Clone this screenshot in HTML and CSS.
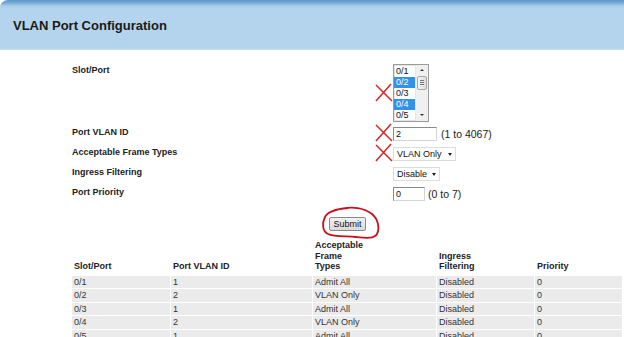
FILE: index.html
```html
<!DOCTYPE html>
<html>
<head>
  <link rel="stylesheet" href="styles.css">
</head>
<body>
  <div class="header">
    <h1 class="title">VLAN Port Configuration</h1>
  </div>

  <!-- Port settings form -->
  <div class="form">
    <div class="label first">Slot/Port</div>
    <div class="mark big"><svg viewBox="0 0 18 19" width="18" height="19"><path d="M1 2 L17 18 M16 1 L1 18" /></svg></div>
    <div class="control">
      <div class="listbox">
        <div class="items">
          <div class="item">0/1</div>
          <div class="item selected">0/2</div>
          <div class="item">0/3</div>
          <div class="item selected">0/4</div>
          <div class="item">0/5</div>
        </div>
        <div class="scrollbar">
          <div class="arrow up"></div>
          <div class="thumb"><span></span><span></span><span></span></div>
          <div class="track"></div>
          <div class="arrow down"></div>
        </div>
      </div>
    </div>

    <div class="label">Port VLAN ID</div>
    <div class="mark"><svg viewBox="0 0 18 19" width="18" height="19"><path d="M1 2 L17 18 M16 1 L1 18" /></svg></div>
    <div class="control">
      <input class="field vlan" type="text" value="2">
      <span class="hint">(1 to 4067)</span>
    </div>

    <div class="label">Acceptable Frame Types</div>
    <div class="mark"><svg viewBox="0 0 18 19" width="18" height="19"><path d="M1 2 L17 18 M16 1 L1 18" /></svg></div>
    <div class="control">
      <div class="select frames">VLAN Only <span class="caret"></span></div>
    </div>

    <div class="label">Ingress Filtering</div>
    <div class="mark"></div>
    <div class="control">
      <div class="select ingress">Disable <span class="caret"></span></div>
    </div>

    <div class="label">Port Priority</div>
    <div class="mark"></div>
    <div class="control">
      <input class="field prio" type="text" value="0">
      <span class="hint small">(0 to 7)</span>
    </div>
  </div>

  <div class="actions">
    <div class="submit-wrap">
      <button class="submit">Submit</button>
      <svg class="circle" viewBox="0 0 66 38" width="66" height="38">
        <path d="M24 5 C34 2 46 4 54 10 C60 15 62 24 59 30 C56 35 48 34 38 33 C28 32 16 33 10 30 C4 27 4 19 7 13 C10 7 18 5 30 4" />
      </svg>
    </div>
  </div>

  <!-- Current port table -->
  <table class="ports">
    <colgroup>
      <col class="c1"><col class="c2"><col class="c3"><col class="c4"><col class="c5">
    </colgroup>
    <thead>
      <tr>
        <th>Slot/Port</th>
        <th>Port VLAN ID</th>
        <th>Acceptable<br>Frame<br>Types</th>
        <th>Ingress<br>Filtering</th>
        <th>Priority</th>
      </tr>
    </thead>
    <tbody>
      <tr><td>0/1</td><td>1</td><td>Admit All</td><td>Disabled</td><td>0</td></tr>
      <tr><td>0/2</td><td>2</td><td>VLAN Only</td><td>Disabled</td><td>0</td></tr>
      <tr><td>0/3</td><td>1</td><td>Admit All</td><td>Disabled</td><td>0</td></tr>
      <tr><td>0/4</td><td>2</td><td>VLAN Only</td><td>Disabled</td><td>0</td></tr>
      <tr><td>0/5</td><td>1</td><td>Admit All</td><td>Disabled</td><td>0</td></tr>
    </tbody>
  </table>
</body>
</html>
```

FILE: styles.css
```css
  body {
    margin: 0;
    overflow: hidden;
    background: #fff;
    font-family: "Liberation Sans", Arial, sans-serif;
    color: #222;
  }

  /* Title bar */
  .header {
    height: 50px;
    box-sizing: border-box;
    padding: 18px 0 0 13px;
    border-top-left-radius: 8px;
    background: linear-gradient(to bottom, #5d98cb 0, #78acd8 3px, #a9cde8 6px, #b3d4ec 9px, #b3d4ec 48px, #c9e0f1 50px);
  }

  .title {
    margin: 0;
    font-size: 13px;
    line-height: 16px;
    font-weight: bold;
    color: #1a1a1a;
  }

  /* Form grid */
  .form {
    margin-top: 14px;
    padding-left: 72px;
    display: grid;
    grid-template-columns: 303px 18px auto;
    grid-template-rows: 57px 14px 14px 14px 14px;
    row-gap: 6px;
  }

  .label {
    font-size: 9px;
    line-height: 11px;
    font-weight: bold;
    align-self: start;
  }

  .label.first {
    margin-top: 1px;
  }

  .mark {
    align-self: center;
    margin-top: -3px;
  }

  .mark.big {
    margin-top: 0;
  }

  .mark svg {
    display: block;
    fill: none;
    stroke: #d42424;
    stroke-width: 1.5;
  }

  .control {
    display: flex;
    align-items: center;
    font-size: 9px;
  }

  /* Multi-select list */
  .listbox {
    width: 36px;
    height: 58px;
    box-sizing: border-box;
    border: 1px solid #9c9c9c;
    box-shadow: inset 0 0 0 1px #e4e4e4;
    display: flex;
    background: #fff;
  }

  .items {
    width: 21px;
    padding-top: 1px;
  }

  .item {
    height: 11px;
    line-height: 11px;
    padding-left: 2px;
    font-size: 9px;
    color: #111;
  }

  .item.selected {
    background: #3391ea;
    color: #fff;
  }

  .scrollbar {
    width: 12px;
    display: flex;
    flex-direction: column;
    background: #f0f0f0;
    border-left: 1px solid #e6e6e6;
  }

  .arrow {
    height: 11px;
    display: flex;
    align-items: center;
    justify-content: center;
  }

  .arrow::after {
    content: "";
    border-left: 2px solid transparent;
    border-right: 2px solid transparent;
  }

  .arrow.up::after {
    border-bottom: 2px solid #333;
  }

  .arrow.down::after {
    border-top: 2px solid #333;
  }

  .thumb {
    height: 14px;
    margin: 0 1px;
    box-sizing: border-box;
    border: 1px solid #a9a9a9;
    border-radius: 2px;
    background: linear-gradient(to right, #f4f4f4, #dcdcdc);
    display: flex;
    flex-direction: column;
    justify-content: center;
    gap: 1px;
    padding: 0 2px;
  }

  .thumb span {
    height: 1px;
    background: #777;
  }

  .track {
    flex: 1;
  }

  /* Inputs and selects */
  .field {
    height: 14px;
    box-sizing: border-box;
    margin: 0;
    padding: 0 2px;
    font-family: inherit;
    font-size: 9px;
    color: #111;
    border: 1px solid #d4d4d4;
    border-top-color: #8a8a8a;
    border-left-color: #8a8a8a;
    outline: none;
  }

  .field.vlan {
    width: 44px;
  }

  .field.prio {
    width: 32px;
  }

  .hint {
    margin-left: 4px;
    font-size: 10.5px;
    color: #222;
  }

  .hint.small {
    margin-left: 3px;
  }

  .select {
    height: 14px;
    box-sizing: border-box;
    border: 1px solid #dcdcdc;
    padding: 0 3px;
    display: flex;
    align-items: center;
    justify-content: space-between;
    font-size: 9px;
    color: #111;
    background: #fff;
  }

  .select.frames {
    width: 63px;
  }

  .select.ingress {
    width: 47px;
  }

  .caret {
    border-left: 2.5px solid transparent;
    border-right: 2.5px solid transparent;
    border-top: 3px solid #222;
  }

  /* Submit */
  .actions {
    margin-top: 16px;
    padding-left: 329px;
  }

  .submit-wrap {
    position: relative;
    width: 37px;
    height: 14px;
  }

  .submit {
    display: block;
    width: 37px;
    height: 14px;
    padding: 0;
    font-family: inherit;
    font-size: 9px;
    color: #111;
    border: 1px solid #8a8a8a;
    border-radius: 2px;
    background: linear-gradient(to bottom, #f2f2f2, #d9d9d9);
  }

  .circle {
    position: absolute;
    left: -11px;
    top: -13px;
    fill: none;
    stroke: #c8101e;
    stroke-width: 1.8;
  }

  /* Port table */
  .ports {
    margin: 7px 0 0 71px;
    width: 552px;
    table-layout: fixed;
    border-collapse: separate;
    border-spacing: 1px;
    font-size: 9px;
  }

  .c1 { width: 98px; }
  .c2 { width: 141px; }
  .c3 { width: 123px; }
  .c4 { width: 97px; }
  .c5 { width: 87px; }

  .ports th {
    text-align: left;
    vertical-align: bottom;
    font-weight: bold;
    line-height: 10.5px;
    padding: 1px 2px 3px;
    color: #222;
  }

  .ports td {
    background: #ebebeb;
    line-height: 10.6px;
    padding: 1px 2px;
    color: #333;
  }
```
